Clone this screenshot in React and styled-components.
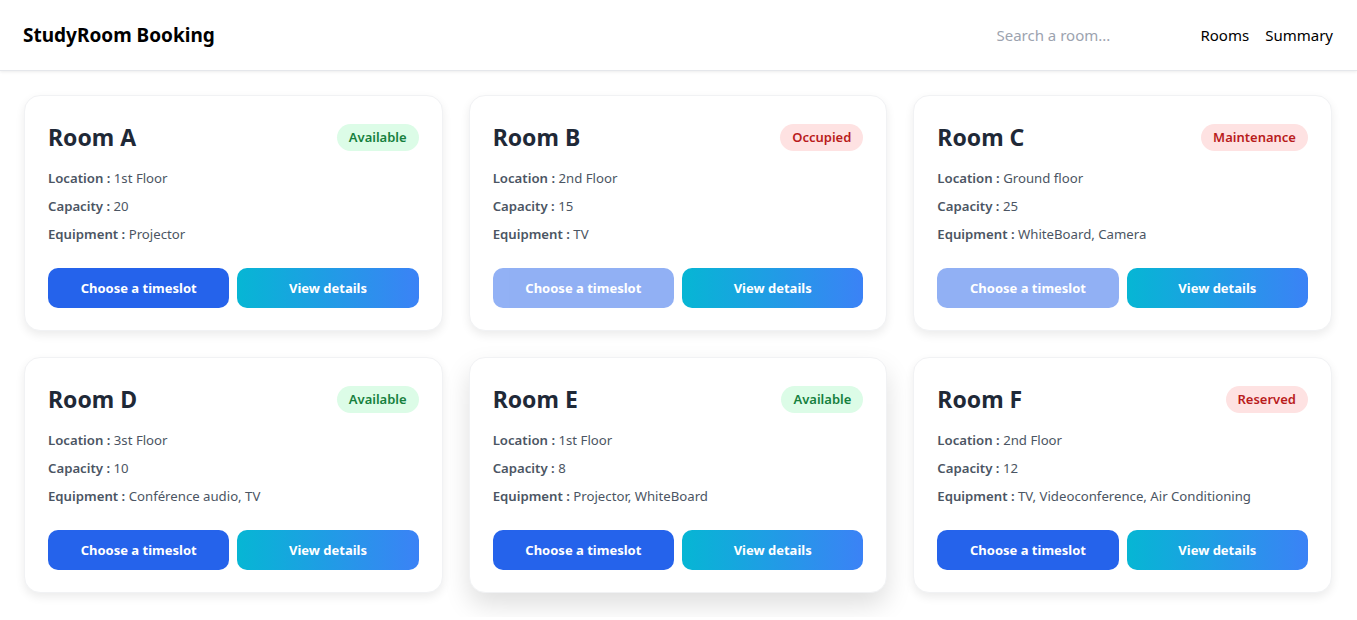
import React from "react";
import styled, { createGlobalStyle } from "styled-components";

const rooms = [
  { name: "Room A", status: "Available", location: "1st Floor", capacity: 20, equipment: "Projector" },
  { name: "Room B", status: "Occupied", location: "2nd Floor", capacity: 15, equipment: "TV" },
  { name: "Room C", status: "Maintenance", location: "Ground floor", capacity: 25, equipment: "WhiteBoard, Camera" },
  { name: "Room D", status: "Available", location: "3st Floor", capacity: 10, equipment: "Conférence audio, TV" },
  { name: "Room E", status: "Available", location: "1st Floor", capacity: 8, equipment: "Projector, WhiteBoard", raised: true },
  { name: "Room F", status: "Reserved", location: "2nd Floor", capacity: 12, equipment: "TV, Videoconference, Air Conditioning" },
];

// rooms that can't be booked right now
const blocked = ["Occupied", "Maintenance"];

const GlobalStyle = createGlobalStyle`
  body {
    margin: 0;
    background: #ffffff;
    font-family: "Noto Sans", "Open Sans", sans-serif;
    color: #111827;
  }
  * { box-sizing: border-box; }
`;

const App = () => {
  return (
    <>
      <GlobalStyle />
      <Header>
        <Brand>StudyRoom Booking</Brand>
        <Right>
          <Search type="text" placeholder="Search a room..." />
          <NavLink>Rooms</NavLink>
          <NavLink>Summary</NavLink>
        </Right>
      </Header>
      <Grid>
        {rooms.map((r) => (
          <Card key={r.name} $raised={r.raised}>
            <CardTop>
              <Title>{r.name}</Title>
              <Badge $ok={r.status === "Available"}>{r.status}</Badge>
            </CardTop>
            <Info>
              <b>Location :</b> {r.location}
            </Info>
            <Info>
              <b>Capacity :</b> {r.capacity}
            </Info>
            <Info>
              <b>Equipment :</b> {r.equipment}
            </Info>
            <Actions>
              <PrimaryButton disabled={blocked.includes(r.status)}>
                Choose a timeslot
              </PrimaryButton>
              <GradientButton>View details</GradientButton>
            </Actions>
          </Card>
        ))}
      </Grid>
    </>
  );
};

const Header = styled.header`
  height: 71px;
  display: flex;
  align-items: center;
  justify-content: space-between;
  padding: 0 24px 0 23px;
  background: #fff;
  border-bottom: 1px solid #e5e7eb;
  box-shadow: 0 1px 3px rgba(0, 0, 0, 0.08);
`;

const Brand = styled.h1`
  margin: 0;
  font-size: 19px;
  font-weight: 700;
  color: #000;
`;

const Right = styled.nav`
  display: flex;
  align-items: center;
  gap: 16px;
`;

const Search = styled.input`
  width: 180px;
  margin-right: 16px;
  padding: 6px 8px;
  border: none;
  outline: none;
  background: transparent;
  font-family: inherit;
  font-size: 15px;
  color: #111827;
  &::placeholder {
    color: #9ca3af;
  }
`;

const NavLink = styled.a`
  font-size: 15px;
  color: #000;
  cursor: pointer;
`;

const Grid = styled.main`
  display: grid;
  grid-template-columns: repeat(3, 1fr);
  gap: 26px;
  padding: 24px 25px 24px 24px;
`;

const Card = styled.div`
  background: #fff;
  border: 1px solid #f1f2f4;
  border-radius: 16px;
  padding: 23px 23px 22px;
  box-shadow: ${(p) =>
    p.$raised
      ? "0 12px 26px rgba(0, 0, 0, 0.13)"
      : "0 4px 10px rgba(0, 0, 0, 0.08)"};
`;

const CardTop = styled.div`
  display: flex;
  align-items: center;
  justify-content: space-between;
  margin-bottom: 9px;
`;

const Title = styled.h2`
  margin: 0;
  font-size: 23px;
  line-height: 36px;
  font-weight: 700;
  color: #1f2937;
`;

const Badge = styled.span`
  padding: 0 12px;
  height: 27px;
  line-height: 27px;
  border-radius: 999px;
  font-size: 13px;
  font-weight: 600;
  background: ${(p) => (p.$ok ? "#dcfce7" : "#fee2e2")};
  color: ${(p) => (p.$ok ? "#15803d" : "#b91c1c")};
`;

const Info = styled.p`
  margin: 0;
  font-size: 13.2px;
  line-height: 28px;
  color: #4b5563;
  b {
    font-weight: 600;
  }
`;

const Actions = styled.div`
  display: grid;
  grid-template-columns: 1fr 1fr;
  gap: 8px;
  margin-top: 20px;
`;

const PrimaryButton = styled.button`
  height: 40px;
  border: none;
  border-radius: 10px;
  background: #2563eb;
  color: #fff;
  font-family: inherit;
  font-size: 13px;
  font-weight: 700;
  cursor: pointer;
  &:disabled {
    opacity: 0.5;
    cursor: not-allowed;
  }
`;

const GradientButton = styled(PrimaryButton)`
  background: linear-gradient(90deg, #06b6d4, #3b82f6);
`;

export default App;
